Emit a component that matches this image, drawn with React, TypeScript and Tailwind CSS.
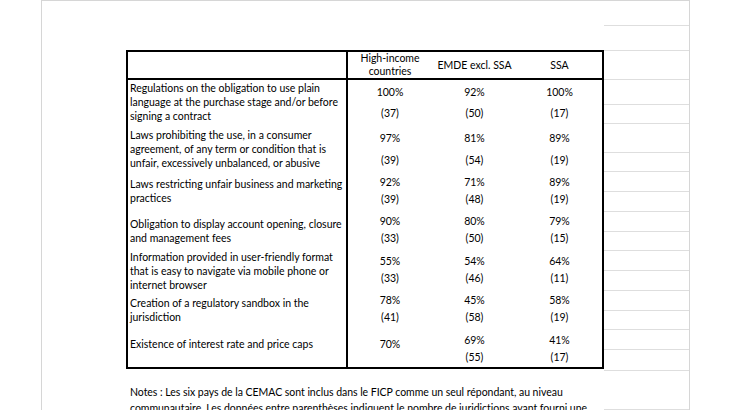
import React from 'react';

type Cell = { v: string[]; pt: string; gap: string };
type Row = { label: string[]; h: string; lpt: string; cells: Cell[] };

const rows: Row[] = [
  {
    label: ['Regulations on the obligation to use plain', 'language at the purchase stage and/or before', 'signing a contract'],
    h: 'h-[43px]',
    lpt: 'pt-[1px]',
    cells: [
      { v: ['100%', '(37)'], pt: 'pt-[5px]', gap: 'gap-[7px]' },
      { v: ['92%', '(50)'], pt: 'pt-[5px]', gap: 'gap-[7px]' },
      { v: ['100%', '(17)'], pt: 'pt-[5px]', gap: 'gap-[7px]' },
    ],
  },
  {
    label: ['Laws prohibiting the use, in a consumer', 'agreement, of any term or condition that is', 'unfair, excessively unbalanced, or abusive'],
    h: 'h-[48px]',
    lpt: 'pt-[5px]',
    cells: [
      { v: ['97%', '(39)'], pt: 'pt-[8px]', gap: 'gap-[8px]' },
      { v: ['81%', '(54)'], pt: 'pt-[8px]', gap: 'gap-[8px]' },
      { v: ['89%', '(19)'], pt: 'pt-[8px]', gap: 'gap-[8px]' },
    ],
  },
  {
    label: ['Laws restricting unfair business and marketing', 'practices'],
    h: 'h-[40px]',
    lpt: 'pt-[6px]',
    cells: [
      { v: ['92%', '(39)'], pt: 'pt-[4px]', gap: 'gap-[3px]' },
      { v: ['71%', '(48)'], pt: 'pt-[4px]', gap: 'gap-[3px]' },
      { v: ['89%', '(19)'], pt: 'pt-[4px]', gap: 'gap-[3px]' },
    ],
  },
  {
    label: ['Obligation to display account opening, closure', 'and management fees'],
    h: 'h-[39px]',
    lpt: 'pt-[6px]',
    cells: [
      { v: ['90%', '(33)'], pt: 'pt-[3px]', gap: 'gap-[3px]' },
      { v: ['80%', '(50)'], pt: 'pt-[3px]', gap: 'gap-[3px]' },
      { v: ['79%', '(15)'], pt: 'pt-[3px]', gap: 'gap-[3px]' },
    ],
  },
  {
    label: ['Information provided in user-friendly format', 'that is easy to navigate via mobile phone or', 'internet browser'],
    h: 'h-[40px]',
    lpt: 'pt-0',
    cells: [
      { v: ['55%', '(33)'], pt: 'pt-[4px]', gap: 'gap-[3px]' },
      { v: ['54%', '(46)'], pt: 'pt-[4px]', gap: 'gap-[3px]' },
      { v: ['64%', '(11)'], pt: 'pt-[4px]', gap: 'gap-[3px]' },
    ],
  },
  {
    label: ['Creation of a regulatory sandbox in the', 'jurisdiction'],
    h: 'h-[39px]',
    lpt: 'pt-[6px]',
    cells: [
      { v: ['78%', '(41)'], pt: 'pt-[3px]', gap: 'gap-[3px]' },
      { v: ['45%', '(58)'], pt: 'pt-[3px]', gap: 'gap-[3px]' },
      { v: ['58%', '(19)'], pt: 'pt-[3px]', gap: 'gap-[3px]' },
    ],
  },
  {
    label: ['Existence of interest rate and price caps'],
    h: 'h-[38px]',
    lpt: 'pt-[8px]',
    cells: [
      { v: ['70%'], pt: 'pt-[8px]', gap: 'gap-[3px]' },
      { v: ['69%', '(55)'], pt: 'pt-[4px]', gap: 'gap-[3px]' },
      { v: ['41%', '(17)'], pt: 'pt-[4px]', gap: 'gap-[3px]' },
    ],
  },
];

// spreadsheet gridlines to the right of the table
const gridRows = [
  'h-[25px]', 'h-[25px]', 'h-[29px]', 'h-[25px]', 'h-[19px]', 'h-[29px]',
  'h-[19px]', 'h-[20px]', 'h-[20px]', 'h-[20px]', 'h-[19px]', 'h-[20px]',
  'h-[20px]', 'h-[20px]', 'h-[19px]', 'h-[20px]', 'h-[21px]', 'h-[39px]',
];

const cols = 'grid grid-cols-[220px_84px_85px_85px]';

function App() {
  return (
    <div className="w-[730px] h-[410px] bg-white flex overflow-hidden font-['Lato',sans-serif] text-[10.5px] leading-[14px] text-black">
      <div className="w-[41px] shrink-0" />
      <div className="w-[649px] h-[410px] shrink-0 border-l border-t border-r border-[#d6d6d6] flex">
        <div className="w-[84px] shrink-0" />

        <div className="w-[478px] shrink-0 pt-[49px]">
          <div className="border-2 border-black">
            <div className={`${cols} h-[28px] border-b-2 border-black`}>
              <div className="border-r-2 border-black" />
              <div className="flex flex-col items-center justify-center leading-[13px]">
                <span>High-income</span>
                <span>countries</span>
              </div>
              <div className="flex items-center justify-center">EMDE excl. SSA</div>
              <div className="flex items-center justify-center">SSA</div>
            </div>

            {rows.map((r, i) => (
              <div key={i} className={`${cols} ${r.h}`}>
                <div className={`border-r-2 border-black pl-[2px] ${r.lpt}`}>
                  {r.label.map((l, j) => (
                    <div key={j} className="whitespace-nowrap">{l}</div>
                  ))}
                </div>
                {r.cells.map((c, k) => (
                  <div key={k} className={`flex flex-col items-center ${c.pt} ${c.gap}`}>
                    {c.v.map((v, m) => (
                      <div key={m}>{v}</div>
                    ))}
                  </div>
                ))}
              </div>
            ))}
          </div>

          <div className="mt-[15px] pl-[4px] leading-[16px] whitespace-nowrap tracking-[-0.03px]">
            <div>Notes : Les six pays de la CEMAC sont inclus dans le FICP comme un seul répondant, au niveau</div>
            <div>communautaire. Les données entre parenthèses indiquent le nombre de juridictions ayant fourni une</div>
          </div>
        </div>

        <div className="w-[85px] shrink-0 flex flex-col">
          {gridRows.map((h, i) => (
            <div key={i} className={`${h} shrink-0 border-b border-[#dedede]`} />
          ))}
        </div>
      </div>
      <div className="flex-1" />
    </div>
  );
}

export default App;
